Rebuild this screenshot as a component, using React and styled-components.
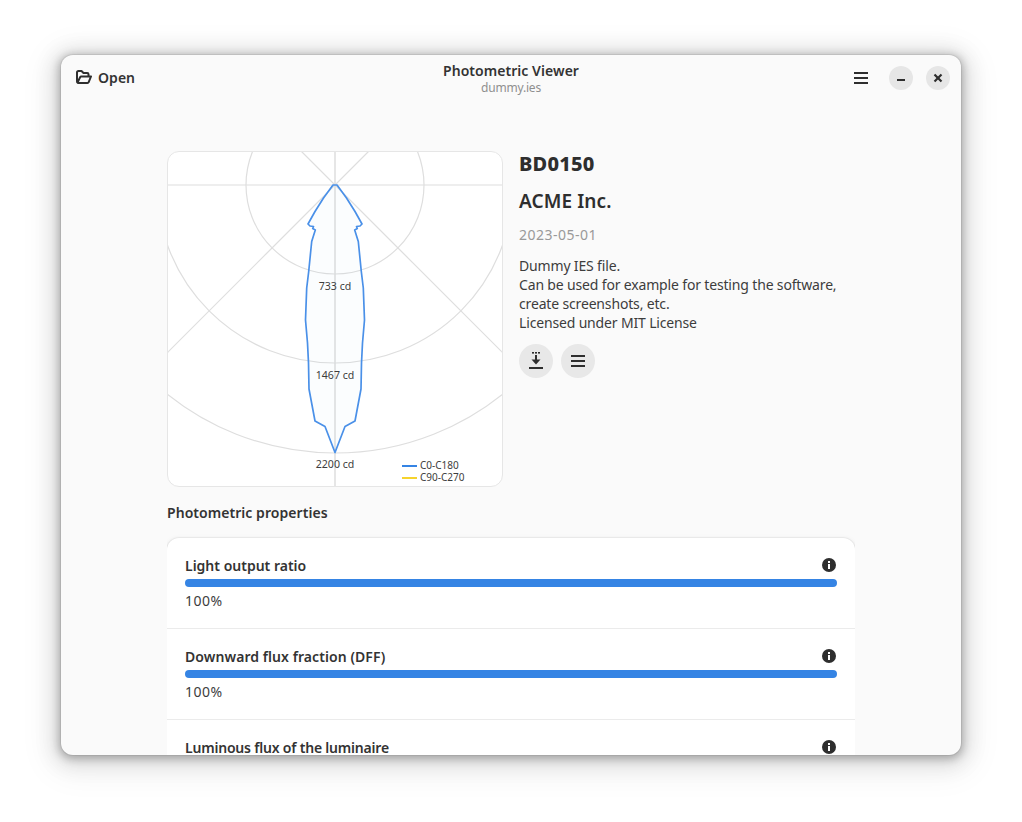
import React from 'react'
import styled, { createGlobalStyle } from 'styled-components'

const GlobalStyle = createGlobalStyle`
html, body {
    margin: 0;
    padding: 0;
    background: #fff;
}
body {
    font-family: 'Noto Sans', sans-serif;
    color: #2e2e2e;
}
`

const Desktop = styled.div`
width: 1022px;
height: 822px;
padding: 55px 61px 67px;
box-sizing: border-box;
overflow: hidden;
`

const Window = styled.div`
height: 700px;
background: #fafafa;
border-radius: 12px;
overflow: hidden;
display: flex;
flex-direction: column;
box-shadow: 0 0 0 1px rgba(0,0,0,.06), 0 2px 8px 2px rgba(0,0,0,.25), 0 3px 20px 8px rgba(0,0,0,.1), 0 6px 32px 14px rgba(0,0,0,.05);
`

const Header = styled.header`
height: 47px;
flex: none;
display: grid;
grid-template-columns: 1fr auto 1fr;
align-items: center;
padding: 0 11px;
`

const OpenButton = styled.div`
display: flex;
align-items: center;
gap: 6px;
margin: -3px 0 0 4px;
font-size: 14px;
font-weight: 600;
letter-spacing: .05px;
color: #333;
`

const TitleBlock = styled.div`
text-align: center;
margin-top: 1px;
`

const AppTitle = styled.div`
font-size: 14px;
font-weight: 600;
line-height: 18px;
letter-spacing: .05px;
color: #333;
`

const FileName = styled.div`
font-size: 12px;
line-height: 16px;
letter-spacing: -.2px;
color: #8f8f8f;
`

const HeaderActions = styled.div`
display: flex;
justify-content: flex-end;
align-items: center;
margin-top: -1px;
`

const MenuGlyph = styled.div`
display: flex;
margin-right: 21px;
`

const WindowButton = styled.div`
width: 24px;
height: 24px;
border-radius: 50%;
background: #e6e6e6;
display: flex;
align-items: center;
justify-content: center;
margin-left: ${props => props.$gap}px;
`

const Content = styled.main`
flex: 1;
min-height: 0;
overflow: hidden;
width: 688px;
margin: 0 auto;
padding-top: 49px;
`

const TopSection = styled.section`
display: flex;
gap: 16px;
`

const ChartBox = styled.div`
width: 336px;
height: 336px;
box-sizing: border-box;
flex: none;
background: #fff;
border: 1px solid #e6e6e6;
border-radius: 12px;
overflow: hidden;
svg {
    display: block;
    margin: -1px;
}
`

const Info = styled.div`
display: flex;
flex-direction: column;
align-items: flex-start;
`

const Name = styled.h1`
margin: -1px 0 0;
font-size: 20px;
font-weight: 800;
line-height: 27px;
letter-spacing: .2px;
color: #2e2e2e;
`

const Maker = styled.h2`
margin: 11px 0 0;
font-size: 19px;
font-weight: 600;
line-height: 26px;
letter-spacing: .1px;
color: #2e2e2e;
`

const DateText = styled.div`
margin-top: 11px;
font-size: 14px;
line-height: 19px;
letter-spacing: .5px;
color: #999;
`

const Description = styled.div`
margin-top: 12px;
font-size: 14px;
line-height: 19px;
letter-spacing: -.16px;
color: #3d3d3d;
`

const ActionRow = styled.div`
display: flex;
gap: 8px;
margin-top: 12px;
`

const RoundButton = styled.div`
width: 34px;
height: 34px;
border-radius: 50%;
background: #e8e8e8;
display: flex;
align-items: center;
justify-content: center;
`

const SectionTitle = styled.h3`
margin: 16px 0 16px;
font-size: 14px;
font-weight: 600;
line-height: 19px;
letter-spacing: .05px;
color: #333;
`

const Card = styled.div`
background: #fff;
border-radius: 12px;
box-shadow: 0 0 0 1px rgba(0,0,0,.03), 0 1px 3px 1px rgba(0,0,0,.07), 0 2px 6px 2px rgba(0,0,0,.03);
`

const Row = styled.div`
height: 91px;
box-sizing: border-box;
padding: 18px 18px 0;
border-bottom: 1px solid #ebebeb;
&:last-child {
    border-bottom: none;
}
`

const RowHead = styled.div`
display: flex;
justify-content: space-between;
align-items: center;
height: 19px;
padding-right: 1px;
svg {
    margin-top: -1px;
}
`

const RowLabel = styled.div`
font-size: 14px;
font-weight: 600;
line-height: 14px;
letter-spacing: ${props => props.$tracking}px;
color: #333;
`

const Bar = styled.div`
height: 8px;
margin-top: 4px;
border-radius: 4px;
background: #3584e4;
`

const RowValue = styled.div`
margin-top: 4px;
font-size: 14px;
line-height: 19px;
letter-spacing: .5px;
color: #3d3d3d;
`

const ChartLabel = styled.text`
font-family: 'Noto Sans', sans-serif;
font-size: 10.6px;
fill: #3d3d3d;
text-anchor: middle;
`

const LegendText = styled.text`
font-family: 'Noto Sans', sans-serif;
font-size: 10px;
fill: #3d3d3d;
`

const centerX = 168
const centerY = 34
const rings = [89, 178, 268]
const gridColor = '#dedede'

// half of the curve as [dx, y], mirrored for the left side
const curve = [
    [2, 34], [11.5, 47], [20, 60.5], [27, 73], [25, 75], [21.5, 75.5], [22.3, 77.5], [19.7, 79],
    [23.3, 90.5], [26.3, 120.5], [28.3, 137], [29.5, 169], [27.5, 192], [26.5, 212], [26, 238],
    [20, 270], [10, 275.5], [0, 301.5],
]

const curvePoints = [
    ...curve.map(([dx, y]) => `${centerX + dx},${y}`),
    ...curve.slice(0, -1).reverse().map(([dx, y]) => `${centerX - dx},${y}`),
].join(' ')

const PolarChart = () => (
    <svg width="336" height="336" viewBox="0 0 336 336">
        <line x1="0" y1={centerY} x2="336" y2={centerY} stroke={gridColor} strokeWidth="1.2" />
        <line x1={centerX} y1="0" x2={centerX} y2="336" stroke="#e6e6e6" strokeWidth="2" />
        <line x1={centerX - 300} y1={centerY + 300} x2={centerX + 34} y2={0} stroke={gridColor} strokeWidth="1.2" />
        <line x1={centerX + 300} y1={centerY + 300} x2={centerX - 34} y2={0} stroke={gridColor} strokeWidth="1.2" />
        {rings.map(r => (
            <circle key={r} cx={centerX} cy={centerY} r={r} fill="none" stroke={gridColor} strokeWidth="1.2" />
        ))}
        <polygon points={curvePoints} fill="#3584e4" fillOpacity=".02" stroke="#4a90e8" strokeWidth="1.7" strokeLinejoin="round" />
        <ChartLabel x={centerX} y="138.500">733 cd</ChartLabel>
        <ChartLabel x={centerX} y="227.500">1467 cd</ChartLabel>
        <ChartLabel x={centerX} y="316.500">2200 cd</ChartLabel>
        <line x1="235" y1="315" x2="250" y2="315" stroke="#3584e4" strokeWidth="2" />
        <line x1="235" y1="327" x2="250" y2="327" stroke="#f6d32d" strokeWidth="2" />
        <LegendText x="253" y="318">C0-C180</LegendText>
        <LegendText x="253" y="330">C90-C270</LegendText>
    </svg>
)

const FolderIcon = () => (
    <svg width="16" height="16" viewBox="0 0 16 16" fill="none" stroke="#2e2e2e" strokeWidth="2" strokeLinejoin="round">
        <path d="M3 14h8.500c.6 0 1-.3 1.200-.8L15 7.500H5.200c-.5 0-.9.300-1.100.7L1.500 13.600" />
        <path d="M3 14c-1.100 0-2-.8-2-1.800V3.500C1 2.600 1.700 2 2.500 2h3l2 2h3.700c.7 0 1.300.6 1.300 1.300v2.200" />
    </svg>
)

const MenuIcon = ({ size = 14 }) => (
    <svg width={size} height="12" viewBox={`0 0 ${size} 12`} fill="#2e2e2e">
        <rect x="0" y="0" width={size} height="2" />
        <rect x="0" y="5" width={size} height="2" />
        <rect x="0" y="10" width={size} height="2" />
    </svg>
)

const MinimizeIcon = () => (
    <svg width="8" height="8" viewBox="0 0 8 8" fill="#2e2e2e">
        <rect x="0" y="5" width="8" height="2" />
    </svg>
)

const CloseIcon = () => (
    <svg width="10" height="10" viewBox="0 0 10 10" stroke="#2e2e2e" strokeWidth="2.200">
        <line x1="1.500" y1="1.500" x2="8.500" y2="8.500" />
        <line x1="8.500" y1="1.500" x2="1.500" y2="8.500" />
    </svg>
)

const DownloadIcon = () => (
    <svg width="16" height="18" viewBox="0 0 16 18" fill="#2e2e2e">
        <rect x="4" y="0" width="2" height="1.600" />
        <rect x="7" y="0" width="2" height="1.600" />
        <rect x="10" y="0" width="2" height="1.600" />
        <rect x="7" y="3" width="2" height="7" />
        <path d="M3.500 7.500 8 12.500l4.500-5z" />
        <rect x="1" y="15" width="14" height="2" />
    </svg>
)

const InfoIcon = () => (
    <svg width="14" height="14" viewBox="0 0 14 14">
        <circle cx="7" cy="7" r="7" fill="#2e2e2e" />
        <rect x="6" y="6" width="2" height="5" fill="#fff" />
        <rect x="6" y="3" width="2" height="2" fill="#fff" />
    </svg>
)

// the third row runs off the bottom of the window, only its label shows
const properties = [
    { label: 'Light output ratio', value: '100%', tracking: 0 },
    { label: 'Downward flux fraction (DFF)', value: '100%', tracking: .07 },
    { label: 'Luminous flux of the luminaire', tracking: -.2 },
]

const App = () => (
    <Desktop>
        <GlobalStyle />
        <Window>
            <Header>
                <OpenButton>
                    <FolderIcon />
                    Open
                </OpenButton>
                <TitleBlock>
                    <AppTitle>Photometric Viewer</AppTitle>
                    <FileName>dummy.ies</FileName>
                </TitleBlock>
                <HeaderActions>
                    <MenuGlyph><MenuIcon /></MenuGlyph>
                    <WindowButton $gap={0}><MinimizeIcon /></WindowButton>
                    <WindowButton $gap={13}><CloseIcon /></WindowButton>
                </HeaderActions>
            </Header>
            <Content>
                <TopSection>
                    <ChartBox>
                        <PolarChart />
                    </ChartBox>
                    <Info>
                        <Name>BD0150</Name>
                        <Maker>ACME Inc.</Maker>
                        <DateText>2023-05-01</DateText>
                        <Description>
                            Dummy IES file.<br />
                            Can be used for example for testing the software,<br />
                            create screenshots, etc.<br />
                            Licensed under MIT License
                        </Description>
                        <ActionRow>
                            <RoundButton><DownloadIcon /></RoundButton>
                            <RoundButton><MenuIcon /></RoundButton>
                        </ActionRow>
                    </Info>
                </TopSection>
                <SectionTitle>Photometric properties</SectionTitle>
                <Card>
                    {properties.map(p => (
                        <Row key={p.label}>
                            <RowHead>
                                <RowLabel $tracking={p.tracking}>{p.label}</RowLabel>
                                <InfoIcon />
                            </RowHead>
                            {p.value && <Bar />}
                            {p.value && <RowValue>{p.value}</RowValue>}
                        </Row>
                    ))}
                </Card>
            </Content>
        </Window>
    </Desktop>
)

export default App
